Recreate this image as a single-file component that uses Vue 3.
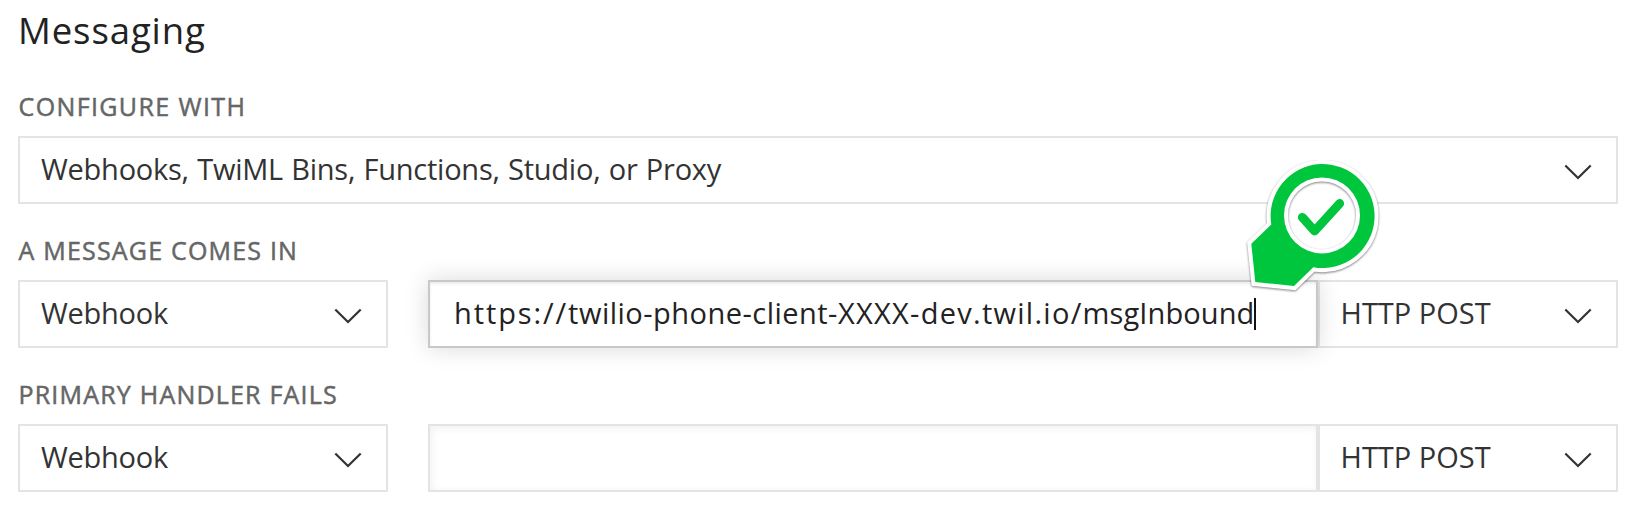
<script setup>
const rows = [
  {
    label: 'A MESSAGE COMES IN',
    key: 'message',
    url: [
      { text: 'https://', cls: 'scheme' },
      { text: 'twilio-phone-client-', cls: 'host' },
      { text: 'XXXX-dev.twil.io/', cls: 'domain' },
      { text: 'msgInbound', cls: 'path' },
    ],
    focused: true,
  },
  { label: 'PRIMARY HANDLER FAILS', key: 'fails', url: [], focused: false },
]
</script>

<template>
  <main class="page">
    <h1 class="title">Messaging</h1>

    <section class="group">
      <div class="label configure">CONFIGURE WITH</div>
      <div class="select">
        <span class="summary">Webhooks, TwiML Bins, Functions, Studio, or Proxy</span>
        <svg class="chevron" viewBox="0 0 28 16"><path d="M1.3 1.5 14 14 26.7 1.5" /></svg>
      </div>
    </section>

    <section v-for="row in rows" :key="row.key" class="group">
      <div class="label">{{ row.label }}</div>
      <div class="fields">
        <div class="select handler">
          <span class="kind">Webhook</span>
          <svg class="chevron" viewBox="0 0 28 16"><path d="M1.3 1.5 14 14 26.7 1.5" /></svg>
        </div>
        <div class="input" :class="{ focused: row.focused }">
          <span><span v-for="part in row.url" :key="part.cls" :class="part.cls">{{ part.text }}</span></span>
          <i v-if="row.focused" class="caret"></i>
        </div>
        <div class="select method">
          <span>HTTP POST</span>
          <svg class="chevron" viewBox="0 0 28 16"><path d="M1.3 1.5 14 14 26.7 1.5" /></svg>
        </div>
      </div>
    </section>

    <svg class="badge" viewBox="0 0 150 150">
      <circle class="face" cx="82" cy="55.4" r="38" />
      <g class="shape">
        <path class="edge" fill-rule="evenodd" d="M31.3 64.6 A52 52 0 1 1 73.3 107.2 L54 126 L15.3 122 L11.3 83.7 Z M82 17.4 a38 38 0 1 0 0 76 a38 38 0 1 0 0 -76 Z" />
        <path class="fill" fill-rule="evenodd" d="M31.3 64.6 A52 52 0 1 1 73.3 107.2 L54 126 L15.3 122 L11.3 83.7 Z M82 17.4 a38 38 0 1 0 0 76 a38 38 0 1 0 0 -76 Z" />
      </g>
      <path class="tick" d="M62.3 57.3 74.6 71 99.7 43.5" />
    </svg>
  </main>
</template>

<style scoped>
.page {
  position: relative;
  box-sizing: border-box;
  width: 1640px;
  height: 510px;
  padding: 5px 22px 0 18px;
  overflow: hidden;
  background: #fff;
  color: #333;
  font: 400 29px/62px "Open Sans", "Noto Sans", sans-serif;
}
.title {
  margin: 0 0 35px;
  height: 50px;
  font-size: 36.5px;
  font-weight: 400;
  line-height: 50px;
  letter-spacing: 0.9px;
  color: #222;
}
.group { margin-bottom: 30px; }
.label {
  height: 32px;
  margin-bottom: 14px;
  padding-left: 0.5px;
  font-size: 25px;
  line-height: 32px;
  letter-spacing: 1.2px;
  color: #666;
  -webkit-text-stroke: 0.5px #666;
}
.configure { letter-spacing: 1.38px; }
.fields { display: flex; }
.select, .input {
  box-sizing: border-box;
  height: 68px;
  border: 2px solid #e4e4e4;
  background: #fff;
  white-space: nowrap;
}
.select {
  display: flex;
  justify-content: space-between;
  padding: 0 24px 0 21px;
}
.summary { letter-spacing: -0.24px; word-spacing: 1px; }
.kind { letter-spacing: -0.25px; }
.handler { width: 370px; margin-right: 40px; }
.method { width: 300px; padding-left: 20.5px; }
.input {
  display: flex;
  width: 890px;
  padding-left: 24px;
  color: #222;
  box-shadow: inset 2px 2px 8px rgba(0, 0, 0, 0.06);
}
.scheme { letter-spacing: 1.9px; }
.host { letter-spacing: 0.48px; }
.domain { letter-spacing: 1.28px; }
.path { letter-spacing: 0.1px; }
.focused {
  position: relative;
  z-index: 1;
  border-color: #c8c8c8;
  box-shadow: 0 0 24px rgba(0, 0, 0, 0.15), inset 0 2px 3px rgba(0, 0, 0, 0.08);
}
.caret {
  width: 2px;
  height: 32px;
  margin-top: 16px;
  background: #111;
}
.chevron {
  width: 28px;
  height: 16px;
  margin-top: 26px;
  fill: none;
  stroke: #333;
  stroke-width: 2.2;
}
.badge {
  position: absolute;
  left: 1240px;
  top: 160px;
  z-index: 2;
  width: 150px;
  height: 150px;
}
.face { fill: #fff; }
.shape { filter: drop-shadow(0.5px 1.5px 1px rgba(0, 0, 0, 0.5)); }
.edge { fill: #fff; stroke: #fff; stroke-width: 8; }
.fill { fill: #00c63d; }
.tick {
  fill: none;
  stroke: #00c63d;
  stroke-width: 8.8;
  stroke-linecap: round;
  stroke-linejoin: round;
}
</style>
